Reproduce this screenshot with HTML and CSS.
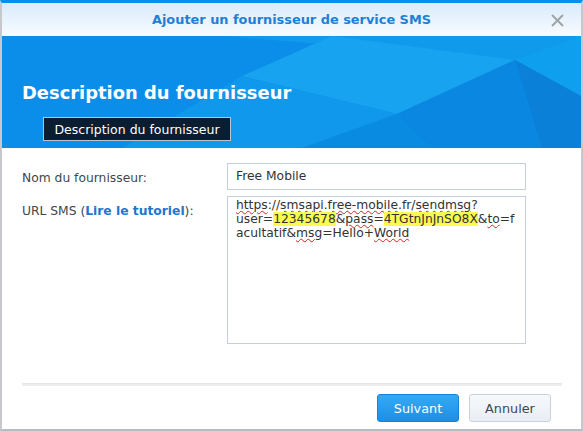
FILE: index.html
```html
<!DOCTYPE html>
<html lang="fr">
<head>
<meta charset="utf-8">
<link rel="stylesheet" href="styles.css">
</head>
<body>
<div class="dialog">
  <div class="titlebar">
    <span class="title">Ajouter un fournisseur de service SMS</span>
    <svg class="close" width="13" height="13" viewBox="0 0 13 13"><path d="M1 1L12 12M12 1L1 12" stroke="#a0a4a8" stroke-width="2"/></svg>
  </div>
  <div class="banner">
    <svg class="facets" width="579" height="112" viewBox="0 0 579 112" preserveAspectRatio="none">
      <rect width="579" height="112" fill="#0b8ee9"/>
      <polygon points="220,0 579,0 579,40 513,24" fill="#0f9aec"/>
      <polygon points="330,0 513,24 395,78 240,40" fill="#17a3ef"/>
      <polygon points="513,24 579,0 579,60" fill="#0ea0ee"/>
      <polygon points="240,40 395,78 300,112 120,112" fill="#1098ec"/>
      <polygon points="513,24 395,78 430,112 579,112 579,75" fill="#0a87e0"/>
      <polygon points="513,24 579,60 579,112 540,112" fill="#0b80d8"/>
      <polygon points="395,78 300,112 430,112" fill="#0a8be2"/>
    </svg>
    <h1 class="heading">Description du fournisseur</h1>
    <div class="tab">Description du fournisseur</div>
  </div>
  <div class="form">
    <div class="row">
      <label class="label">Nom du fournisseur:</label>
      <div class="field input">Free Mobile</div>
    </div>
    <div class="row">
      <label class="label">URL SMS (<a class="link">Lire le tutoriel</a>):</label>
      <div class="field textarea"><span class="sp">https</span>://<span class="sp">smsapi</span>.<span class="sp">free-mobile</span>.fr/<span class="sp">sendmsg</span>?<br>user=<span class="hl">12345678</span>&amp;<span class="sp">pass</span>=<span class="hl">4TGtnJnJnSO8X</span>&amp;<span class="sp">to</span>=f<br>acultatif&amp;<span class="sp">msg</span>=Hello+<span class="sp">World</span></div>
    </div>
  </div>
  <div class="footer">
    <div class="sep"></div>
    <div class="buttons">
      <button class="btn primary">Suivant</button>
      <button class="btn">Annuler</button>
    </div>
  </div>
</div>
</body>
</html>
```
FILE: styles.css
```css
* { box-sizing: border-box; }
html, body { margin: 0; padding: 0; background: #fff; }
body { font-family: "DejaVu Sans", Verdana, sans-serif; font-size: 12.3px; color: #333; }
.dialog {
  width: 583px; height: 431px;
  border-top: 3px solid #0a8fe8;
  border-left: 2px solid #c6c8cb;
  border-right: 2px solid #c6c8cb;
  border-bottom: 2px solid #b8bcc0;
  display: flex; flex-direction: column;
  overflow: hidden;
}
.titlebar {
  height: 33px; flex: none;
  background: linear-gradient(#daebfb, #f7fbff);
  display: flex; align-items: center; justify-content: center;
  position: relative;
}
.title { font-weight: bold; font-size: 12.9px; color: #1e7fd6; }
.close { position: absolute; right: 17px; top: 11px; }
.banner {
  height: 112px; flex: none; position: relative;
  padding: 46px 0 0 20px;
}
.facets { position: absolute; left: 0; top: 0; z-index: 0; }
.heading {
  position: relative; z-index: 1;
  margin: 0; font-size: 17.9px; font-weight: bold; color: #fff; line-height: 22px;
}
.tab {
  position: relative; z-index: 1;
  margin: 13px 0 0 21px;
  width: 188px; height: 24px;
  background: #0b1e31; border: 1px solid #b9c4cf;
  color: #fff; font-size: 12.5px;
  display: flex; align-items: center; justify-content: center;
}
.form { padding: 15px 55px 0 20px; display: flex; flex-direction: column; gap: 6px; flex: none; }
.row { display: flex; align-items: flex-start; }
.label { width: 205px; flex: none; color: #404850; padding-top: 8px; }
.link { color: #1a77d2; font-weight: bold; }
.field { width: 299px; border: 1px solid #c5cfd9; color: #333; padding: 0 8px; }
.input { height: 27px; line-height: 25px; }
.textarea { height: 148px; padding-top: 1px; line-height: 14px; }
.hl { background: #fcfb50; }
.sp { text-decoration: underline wavy #e02020; text-decoration-thickness: 1px; text-underline-offset: 1px; }
.footer { flex: 1; display: flex; flex-direction: column; padding: 39px 0 0 20px; }
.sep { height: 3px; width: 540px; border-top: 1px solid #e3e5e7; border-bottom: 2px solid #eceef0; }
.buttons { display: flex; justify-content: flex-end; gap: 10px; padding: 8px 30px 0 0; }
.btn {
  width: 82px; height: 28px; border-radius: 3px;
  font-family: inherit; font-size: 12.8px; color: #404850;
  background: linear-gradient(#f6f8fb, #e9eef4); border: 1px solid #c8d2dc;
}
.primary { background: linear-gradient(#36a9f3, #1c8fe6); border-color: #1a80d4; color: #fff; }
```
